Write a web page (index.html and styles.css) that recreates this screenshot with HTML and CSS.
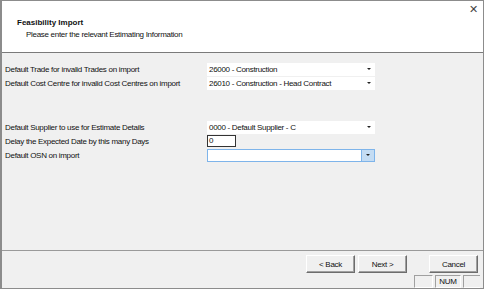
FILE: index.html
```html
<html>
<head>
    <title>Feasibility Import</title>
    <link rel="stylesheet" href="styles.css">
</head>
<body>
    <div class="wizard">
        <div class="header">
            <div class="titles">
                <h1>Feasibility Import</h1>
                <p>Please enter the relevant Estimating Information</p>
            </div>
            <span class="close">&#10005;</span>
        </div>

        <div class="fields">
            <div class="row first">
                <label>Default Trade for invalid Trades on import</label>
                <div class="combo"><span>26000 - Construction</span><i class="arrow"></i></div>
            </div>
            <div class="row">
                <label>Default Cost Centre for invalid Cost Centres on import</label>
                <div class="combo"><span>26010 - Construction - Head Contract</span><i class="arrow"></i></div>
            </div>
            <div class="row gap">
                <label>Default Supplier to use for Estimate Details</label>
                <div class="combo"><span>0000 - Default Supplier - C</span><i class="arrow"></i></div>
            </div>
            <div class="row">
                <label>Delay the Expected Date by this many Days</label>
                <div class="textbox">0</div>
            </div>
            <div class="row">
                <label>Default OSN on import</label>
                <div class="combo focus"><span></span><i class="arrow"></i></div>
            </div>
        </div>

        <div class="buttons">
            <button>&lt; Back</button>
            <button>Next &gt;</button>
            <button class="cancel">Cancel</button>
        </div>

        <div class="status">
            <span class="cell"></span>
            <span class="cell num">NUM</span>
            <span class="cell last"></span>
        </div>
    </div>
</body>
</html>
```

FILE: styles.css
```css
body {
    margin: 0;
    font-family: "Liberation Sans", Arial, sans-serif;
    font-size: 8px;
    letter-spacing: -0.3px;
    color: #111;
}
.wizard {
    width: 484px;
    height: 289px;
    box-sizing: border-box;
    border: 1px solid #8c8c8c;
    border-left-width: 2px;
    background: #f0f0f0;
    display: flex;
    flex-direction: column;
}
.header {
    height: 51px;
    background: #fff;
    border-bottom: 1px solid #7a7a7a;
    display: flex;
    justify-content: space-between;
}
.titles {
    padding: 17px 0 0 15px;
}
.titles h1 {
    margin: 0;
    font-size: 8px;
    font-weight: bold;
    letter-spacing: 0;
}
.titles p {
    margin: 3px 0 0 9px;
}
.close {
    font-size: 11px;
    color: #444;
    padding: 2px 5px 0 0;
}
.fields {
    flex: 1;
    padding: 9px 0 0 3px;
    border-bottom: 1px solid #9a9a9a;
}
.row {
    display: flex;
    align-items: center;
    height: 14px;
}
.row.gap {
    margin-top: 30px;
}
.row label {
    width: 202px;
}
.combo {
    width: 168px;
    height: 13px;
    background: #fff;
    display: flex;
    align-items: center;
    justify-content: space-between;
    padding-left: 2px;
    box-sizing: border-box;
}
.combo .arrow {
    width: 12px;
    height: 100%;
    display: flex;
    align-items: center;
    justify-content: center;
}
.combo .arrow::after {
    content: "";
    border-left: 2px solid transparent;
    border-right: 2px solid transparent;
    border-top: 2px solid #222;
}
.combo.focus {
    border: 1px solid #7eb4ea;
}
.combo.focus .arrow {
    background: #c4dcf3;
    border-left: 1px solid #7eb4ea;
}
.textbox {
    width: 29px;
    height: 12px;
    box-sizing: border-box;
    background: #fff;
    border: 1px solid #333;
    padding-left: 1px;
    line-height: 10px;
}
.buttons {
    display: flex;
    justify-content: flex-end;
    gap: 3px;
    padding: 4px 5px 0 0;
    height: 20px;
}
.buttons button {
    width: 49px;
    height: 18px;
    font: inherit;
    letter-spacing: inherit;
    color: #111;
    background: #f0f0f0;
    border: 1px solid;
    border-color: #fff #6d6d6d #6d6d6d #fff;
    box-shadow: inset -1px -1px 0 #a0a0a0;
    padding: 0;
}
.buttons .cancel {
    margin-left: 19px;
}
.status {
    display: flex;
    justify-content: flex-end;
    gap: 2px;
    padding: 0 3px 0 0;
    height: 13px;
}
.cell {
    width: 19px;
    box-sizing: border-box;
    border: 1px solid;
    border-color: #a0a0a0 #fff #fff #a0a0a0;
    line-height: 11px;
    text-align: center;
}
.cell.num {
    width: 26px;
}
.cell.last {
    width: 17px;
    border-right: none;
}
```
